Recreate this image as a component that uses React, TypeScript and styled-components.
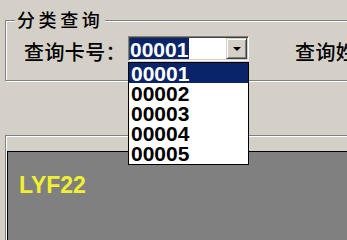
import React from "react";
import styled, { createGlobalStyle } from "styled-components";

const GlobalStyle = createGlobalStyle`
  html, body {
    margin: 0;
    padding: 0;
    background: #d4d0c8;
    overflow: hidden;
  }
`;

const Page = styled.div`
  width: 347px;
  height: 100vh;
  min-height: 210px;
  overflow: hidden;
  padding-left: 5px;
  padding-top: 20px;
  box-sizing: border-box;
  background: #d4d0c8;
  display: flex;
  flex-direction: column;
`;

const GroupBox = styled.div`
  position: relative;
  width: 420px;
  height: 61px;
  box-sizing: border-box;
  border: 1px solid #808080;
  box-shadow: inset 1px 1px 0 #fff, 1px 1px 0 #fff;
  padding: 15px 0 0 18px;
  flex-shrink: 0;
`;

const Legend = styled.div`
  position: absolute;
  top: -11px;
  left: 9px;
  padding: 0 2px;
  background: #d4d0c8;
  font-family: "Noto Sans CJK SC", sans-serif;
  font-size: 18px;
  line-height: 18px;
  letter-spacing: 3.6px;
  font-weight: 500;
  color: #000;
`;

const Row = styled.div`
  display: flex;
  align-items: flex-start;
`;

const Label = styled.span<{ $gap?: number; $width?: number }>`
  font-family: "Noto Sans CJK SC", sans-serif;
  font-size: 20px;
  line-height: 20px;
  letter-spacing: 0.4px;
  font-weight: 500;
  color: #000;
  margin-top: 6px;
  margin-left: ${(p) => p.$gap ?? 0}px;
  width: ${(p) => (p.$width ? `${p.$width}px` : "auto")};
  flex-shrink: 0;
  white-space: nowrap;
`;

const ComboWrap = styled.div`
  position: relative;
  flex-shrink: 0;
`;

const Combo = styled.div`
  width: 121px;
  height: 25px;
  box-sizing: border-box;
  border: 1px solid;
  border-color: #808080 #fff #fff #808080;
  box-shadow: inset 1px 1px 0 #404040, inset -1px -1px 0 #d4d0c8;
  background: #fff;
  padding: 1px;
  display: flex;
  align-items: flex-start;
`;

const Selected = styled.span`
  display: block;
  height: 20px;
  padding-top: 1px;
  line-height: 21px;
  padding-right: 1px;
  background: #0a246a;
  color: #fff;
  font-family: "Liberation Sans", Arial, sans-serif;
  font-weight: bold;
  font-size: 21px;
`;

const DropButton = styled.div`
  margin-left: auto;
  width: 21px;
  height: 21px;
  box-sizing: border-box;
  background: #d4d0c8;
  border: 1px solid;
  border-color: #d4d0c8 #404040 #404040 #d4d0c8;
  box-shadow: inset 1px 1px 0 #fff, inset -1px -1px 0 #808080;
  display: flex;
  align-items: center;
  justify-content: center;
`;

const Arrow = styled.span`
  width: 0;
  height: 0;
  border-left: 4px solid transparent;
  border-right: 4px solid transparent;
  border-top: 4px solid #000;
  margin-top: 1px;
`;

const List = styled.div`
  position: absolute;
  top: 26px;
  left: 0;
  width: 121px;
  box-sizing: border-box;
  background: #fff;
  border: 1px solid #000;
  padding-bottom: 1px;
  z-index: 5;
`;

const Item = styled.div<{ $active?: boolean }>`
  height: 19px;
  padding-top: 1px;
  line-height: 20px;
  padding-left: 2px;
  background: ${(p) => (p.$active ? "#0a246a" : "#fff")};
  color: ${(p) => (p.$active ? "#fff" : "#000")};
  font-family: "Liberation Sans", Arial, sans-serif;
  font-weight: bold;
  font-size: 21px;
`;

const Frame = styled.div`
  margin-top: 54px;
  flex: 1;
  width: 420px;
  box-sizing: border-box;
  border-top: 1px solid #808080;
  border-left: 1px solid #808080;
  box-shadow: inset 1px 1px 0 #fff;
  padding: 15px 0 0 1px;
  display: flex;
  flex-direction: column;
`;

const Panel = styled.div`
  flex: 1;
  background: #808080;
  border-top: 1px solid #000;
  border-left: 1px solid #000;
  padding: 22px 0 0 11px;
`;

const Title = styled.div`
  font-family: "Liberation Sans", Arial, sans-serif;
  font-weight: bold;
  font-size: 23px;
  line-height: 23px;
  color: #f0f030;
`;

const cards = ["00001", "00002", "00003", "00004", "00005"];

export default function App() {
  return (
    <>
      <GlobalStyle />
      <Page>
        <GroupBox>
          <Legend>分类查询</Legend>
          <Row>
            <Label $width={104}>查询卡号：</Label>
            <ComboWrap>
              <Combo>
                <Selected>00001</Selected>
                <DropButton>
                  <Arrow />
                </DropButton>
              </Combo>
              <List>
                {cards.map((c, i) => (
                  <Item key={c} $active={i === 0}>
                    {c}
                  </Item>
                ))}
              </List>
            </ComboWrap>
            <Label $gap={46}>查询姓名：</Label>
          </Row>
        </GroupBox>
        <Frame>
          <Panel>
            <Title>LYF22</Title>
          </Panel>
        </Frame>
      </Page>
    </>
  );
}
